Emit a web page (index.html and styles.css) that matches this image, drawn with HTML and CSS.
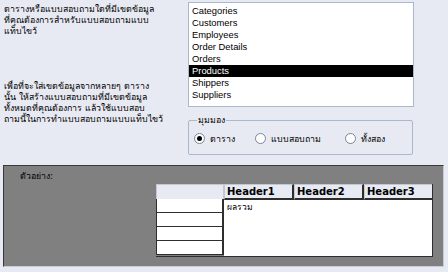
FILE: index.html
```html
<!DOCTYPE html>
<html lang="th">
<head>
  <meta charset="UTF-8" />
  <title>ตัวช่วยสร้างแบบสอบถามแบบแท็บไขว้</title>
  <link rel="stylesheet" href="styles.css">
</head>
<body>

<div class="top">
  <div class="notes">
    <p class="note">ตารางหรือแบบสอบถามใดที่มีเขตข้อมูล<br>ที่คุณต้องการสำหรับแบบสอบถามแบบ<br>แท็บไขว้</p>
    <p class="note second">เพื่อที่จะใส่เขตข้อมูลจากหลายๆ ตาราง<br>นั้น  ให้สร้างแบบสอบถามที่มีเขตข้อมูล<br>ทั้งหมดที่คุณต้องการ แล้วใช้แบบสอบ<br>ถามนี้ในการทำแบบสอบถามแบบแท็บไขว้</p>
  </div>

  <div class="side">
    <ul class="listbox">
      <li>Categories</li>
      <li>Customers</li>
      <li>Employees</li>
      <li>Order Details</li>
      <li>Orders</li>
      <li class="selected">Products</li>
      <li>Shippers</li>
      <li>Suppliers</li>
    </ul>

    <fieldset class="view">
      <legend>มุมมอง</legend>
      <label class="radio"><span class="dot checked"></span>ตาราง</label>
      <label class="radio"><span class="dot"></span>แบบสอบถาม</label>
      <label class="radio"><span class="dot"></span>ทั้งสอง</label>
    </fieldset>
  </div>
</div>

<div class="sample">
  <div class="sample-title">ตัวอย่าง:</div>
  <div class="grid">
    <div class="rowheads">
      <div class="corner"></div>
      <div class="rh"></div>
      <div class="rh"></div>
      <div class="rh"></div>
      <div class="rh"></div>
    </div>
    <div class="data">
      <div class="heads">
        <div class="ch">Header1</div>
        <div class="ch">Header2</div>
        <div class="ch">Header3</div>
      </div>
      <div class="body">ผลรวม</div>
    </div>
  </div>
</div>

</body>
</html>
```

FILE: styles.css
```css
body {
  margin: 0;
  width: 448px;
  height: 272px;
  background: #e8eaf3;
  font-family: Tahoma, "DejaVu Sans", "Liberation Sans", sans-serif;
  font-size: 8.8px;
  color: #000;
  overflow: hidden;
}

.top {
  display: flex;
  height: 162px;
}

.notes {
  width: 184px;
  padding: 4px 0 0 4px;
}

.note {
  margin: 0;
  line-height: 11px;
}

.note.second {
  margin-top: 44px;
}

.side {
  padding-top: 2px;
}

.listbox {
  list-style: none;
  margin: 0;
  padding: 2px 0 5px 0;
  width: 224px;
  height: 96px;
  background: #fff;
  border: 1px solid #a9b8cf;
  font-family: "Liberation Sans", sans-serif;
  font-size: 9.4px;
}

.listbox li {
  height: 12px;
  line-height: 12px;
  padding-left: 3px;
}

.listbox li.selected {
  background: #000;
  color: #fff;
}

.view {
  margin: 8px 0 0 0;
  padding: 3px 0 5px 5px;
  width: 218px;
  height: 30px;
  border: 1px solid #a9b8cf;
  border-radius: 2px;
  display: flex;
  align-items: center;
}

.view legend {
  padding: 0 1px;
  margin-left: 3px;
  line-height: 10px;
}

.radio {
  display: flex;
  align-items: center;
  gap: 5px;
  line-height: 12px;
}

.radio:nth-of-type(1) { width: 61px; }
.radio:nth-of-type(2) { width: 90px; }

.dot {
  width: 9px;
  height: 9px;
  border: 1px solid #7b8597;
  border-radius: 50%;
  background: #fff;
  position: relative;
}

.dot.checked::after {
  content: "";
  position: absolute;
  left: 2px;
  top: 2px;
  width: 5px;
  height: 5px;
  border-radius: 50%;
  background: #000;
}

.sample {
  margin: 3px 4px 0 3px;
  height: 102px;
  background: #808080;
  border-top: 1px solid #3a3a3a;
  border-left: 1px solid #3a3a3a;
  border-right: 1px solid #c8ccd6;
  border-bottom: 1px solid #c8ccd6;
  box-sizing: border-box;
}

.sample-title {
  padding: 4px 0 0 16px;
  line-height: 12px;
}

.grid {
  display: flex;
  margin: 2px 0 0 152px;
  width: 276px;
  border-right: 1px solid #2e2e2e;
  border-bottom: 1px solid #2e2e2e;
}

.rowheads {
  width: 68px;
}

.corner {
  height: 15px;
  background: #e8eaf3;
  border: 1px solid #c3c7d2;
  border-bottom: none;
  box-sizing: border-box;
}

.rh {
  height: 14px;
  background: #fff;
  border: 1px solid #2e2e2e;
  border-top: none;
  border-right: 2px solid #2e2e2e;
  box-sizing: border-box;
}

.rh:first-of-type {
  border-top: 1px solid #2e2e2e;
}

.data {
  flex: 1;
}

.heads {
  display: flex;
  height: 16px;
}

.ch {
  flex: 1;
  background: #e8eaf3;
  border-top: 1px solid #c3c7d2;
  border-left: 1px solid #c3c7d2;
  border-right: 2px solid #2e2e2e;
  border-bottom: 2px solid #2e2e2e;
  box-sizing: border-box;
  font-family: "DejaVu Sans", sans-serif;
  font-weight: bold;
  font-size: 10px;
  line-height: 13px;
  padding-left: 2px;
}

.ch:last-child {
  border-right: none;
}

.body {
  height: 56px;
  background: #fff;
  padding: 2px 0 0 3px;
  box-sizing: border-box;
  font-size: 8.5px;
  line-height: 11px;
}
```
